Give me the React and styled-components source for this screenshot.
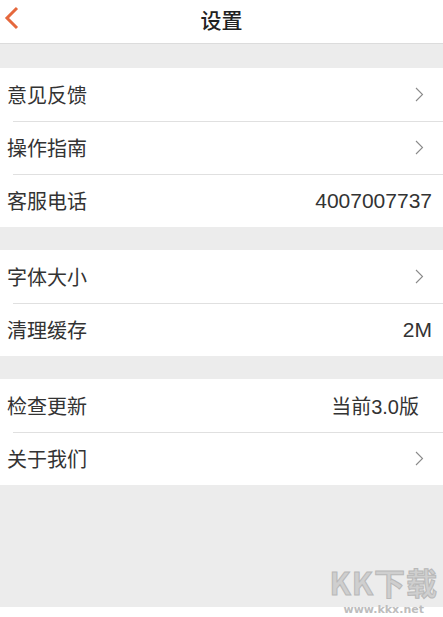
import React from "react";
import styled, { createGlobalStyle } from "styled-components";

const GlobalStyle = createGlobalStyle`
  html, body {
    margin: 0;
    padding: 0;
    background: #ffffff;
  }
  body {
    font-family: "Noto Sans CJK SC", "Liberation Sans", sans-serif;
  }
`;

const StyledPage = styled.div`
  position: relative;
  width: 443px;
  height: 617px;
  display: flex;
  flex-direction: column;
  background: #ffffff;
  overflow: hidden;
`;

const StyledHeader = styled.div`
  height: 43px;
  flex-shrink: 0;
  display: flex;
  align-items: center;
  justify-content: center;
  position: relative;
  background: #ffffff;
  border-bottom: 1px solid #dcdcdc;
`;

const StyledBack = styled.div`
  position: absolute;
  left: 4px;
  top: 6px;
  width: 16px;
  height: 24px;
`;

const StyledTitle = styled.div`
  font-size: 21px;
  color: #222222;
  font-weight: 500;
  margin-top: -6px;
`;

const StyledBody = styled.div`
  flex: 1;
  display: flex;
  flex-direction: column;
  gap: 23px;
  padding-top: 24px;
  background: #ececec;
`;

const StyledGroup = styled.div`
  background: #ffffff;
  display: flex;
  flex-direction: column;
`;

const StyledRow = styled.div`
  height: 53px;
  display: flex;
  align-items: center;
  justify-content: space-between;
  padding: 0 11px 0 7px;
  box-sizing: border-box;
  position: relative;

  & + &::before {
    content: "";
    position: absolute;
    top: 0;
    left: 13px;
    right: 0;
    height: 1px;
    background: #e0e0e0;
  }
`;

const StyledLabel = styled.span`
  font-size: 20px;
  color: #333333;
`;

const StyledValue = styled.span`
  font-size: ${(p) => (p.$cjk ? "20px" : "21px")};
  color: #333333;
  margin-right: ${(p) => (p.$cjk ? "13px" : "0")};
  font-family: "Liberation Sans", "Noto Sans CJK SC", sans-serif;
`;

const StyledChevron = styled.svg`
  width: 9px;
  height: 15px;
  margin-right: 8px;
`;

const StyledFooter = styled.div`
  height: 10px;
  flex-shrink: 0;
  background: #ffffff;
`;

const StyledWatermark = styled.div`
  position: absolute;
  right: 5px;
  bottom: 0;
  display: flex;
  flex-direction: column;
  align-items: center;
  pointer-events: none;
`;

const StyledMarkBig = styled.div`
  font-size: 31px;
  font-weight: 700;
  letter-spacing: 1px;
  color: #cfcfcf;
  -webkit-text-stroke: 1px #b8b8b8;
  line-height: 42px;
`;

const StyledMarkSmall = styled.div`
  font-family: "DejaVu Sans", sans-serif;
  font-size: 11px;
  font-weight: 700;
  color: #bdbdbd;
  line-height: 14px;
`;

const Chevron = () => (
  <StyledChevron viewBox="0 0 9 15">
    <path d="M1 1 L7.5 7.5 L1 14" fill="none" stroke="#8a8a8a" strokeWidth="1.1" />
  </StyledChevron>
);

const groups = [
  [
    { label: "意见反馈" },
    { label: "操作指南" },
    { label: "客服电话", value: "4007007737" },
  ],
  [
    { label: "字体大小" },
    { label: "清理缓存", value: "2M" },
  ],
  [
    { label: "检查更新", value: "当前3.0版", cjk: true },
    { label: "关于我们" },
  ],
];

const App = () => {
  return (
    <>
      <GlobalStyle />
      <StyledPage>
        <StyledHeader>
          <StyledBack>
            <svg width="16" height="24" viewBox="0 0 16 24">
              <path d="M13 2 L3 12 L13 22" fill="none" stroke="#e5683d" strokeWidth="3" />
            </svg>
          </StyledBack>
          <StyledTitle>设置</StyledTitle>
        </StyledHeader>
        <StyledBody>
          {groups.map((rows, index) => (
            <StyledGroup key={index}>
              {rows.map((row) => (
                <StyledRow key={row.label}>
                  <StyledLabel>{row.label}</StyledLabel>
                  {row.value ? (
                    <StyledValue $cjk={row.cjk}>{row.value}</StyledValue>
                  ) : (
                    <Chevron />
                  )}
                </StyledRow>
              ))}
            </StyledGroup>
          ))}
        </StyledBody>
        <StyledFooter />
        <StyledWatermark>
          <StyledMarkBig>KK下载</StyledMarkBig>
          <StyledMarkSmall>www.kkx.net</StyledMarkSmall>
        </StyledWatermark>
      </StyledPage>
    </>
  );
};

export default App;
